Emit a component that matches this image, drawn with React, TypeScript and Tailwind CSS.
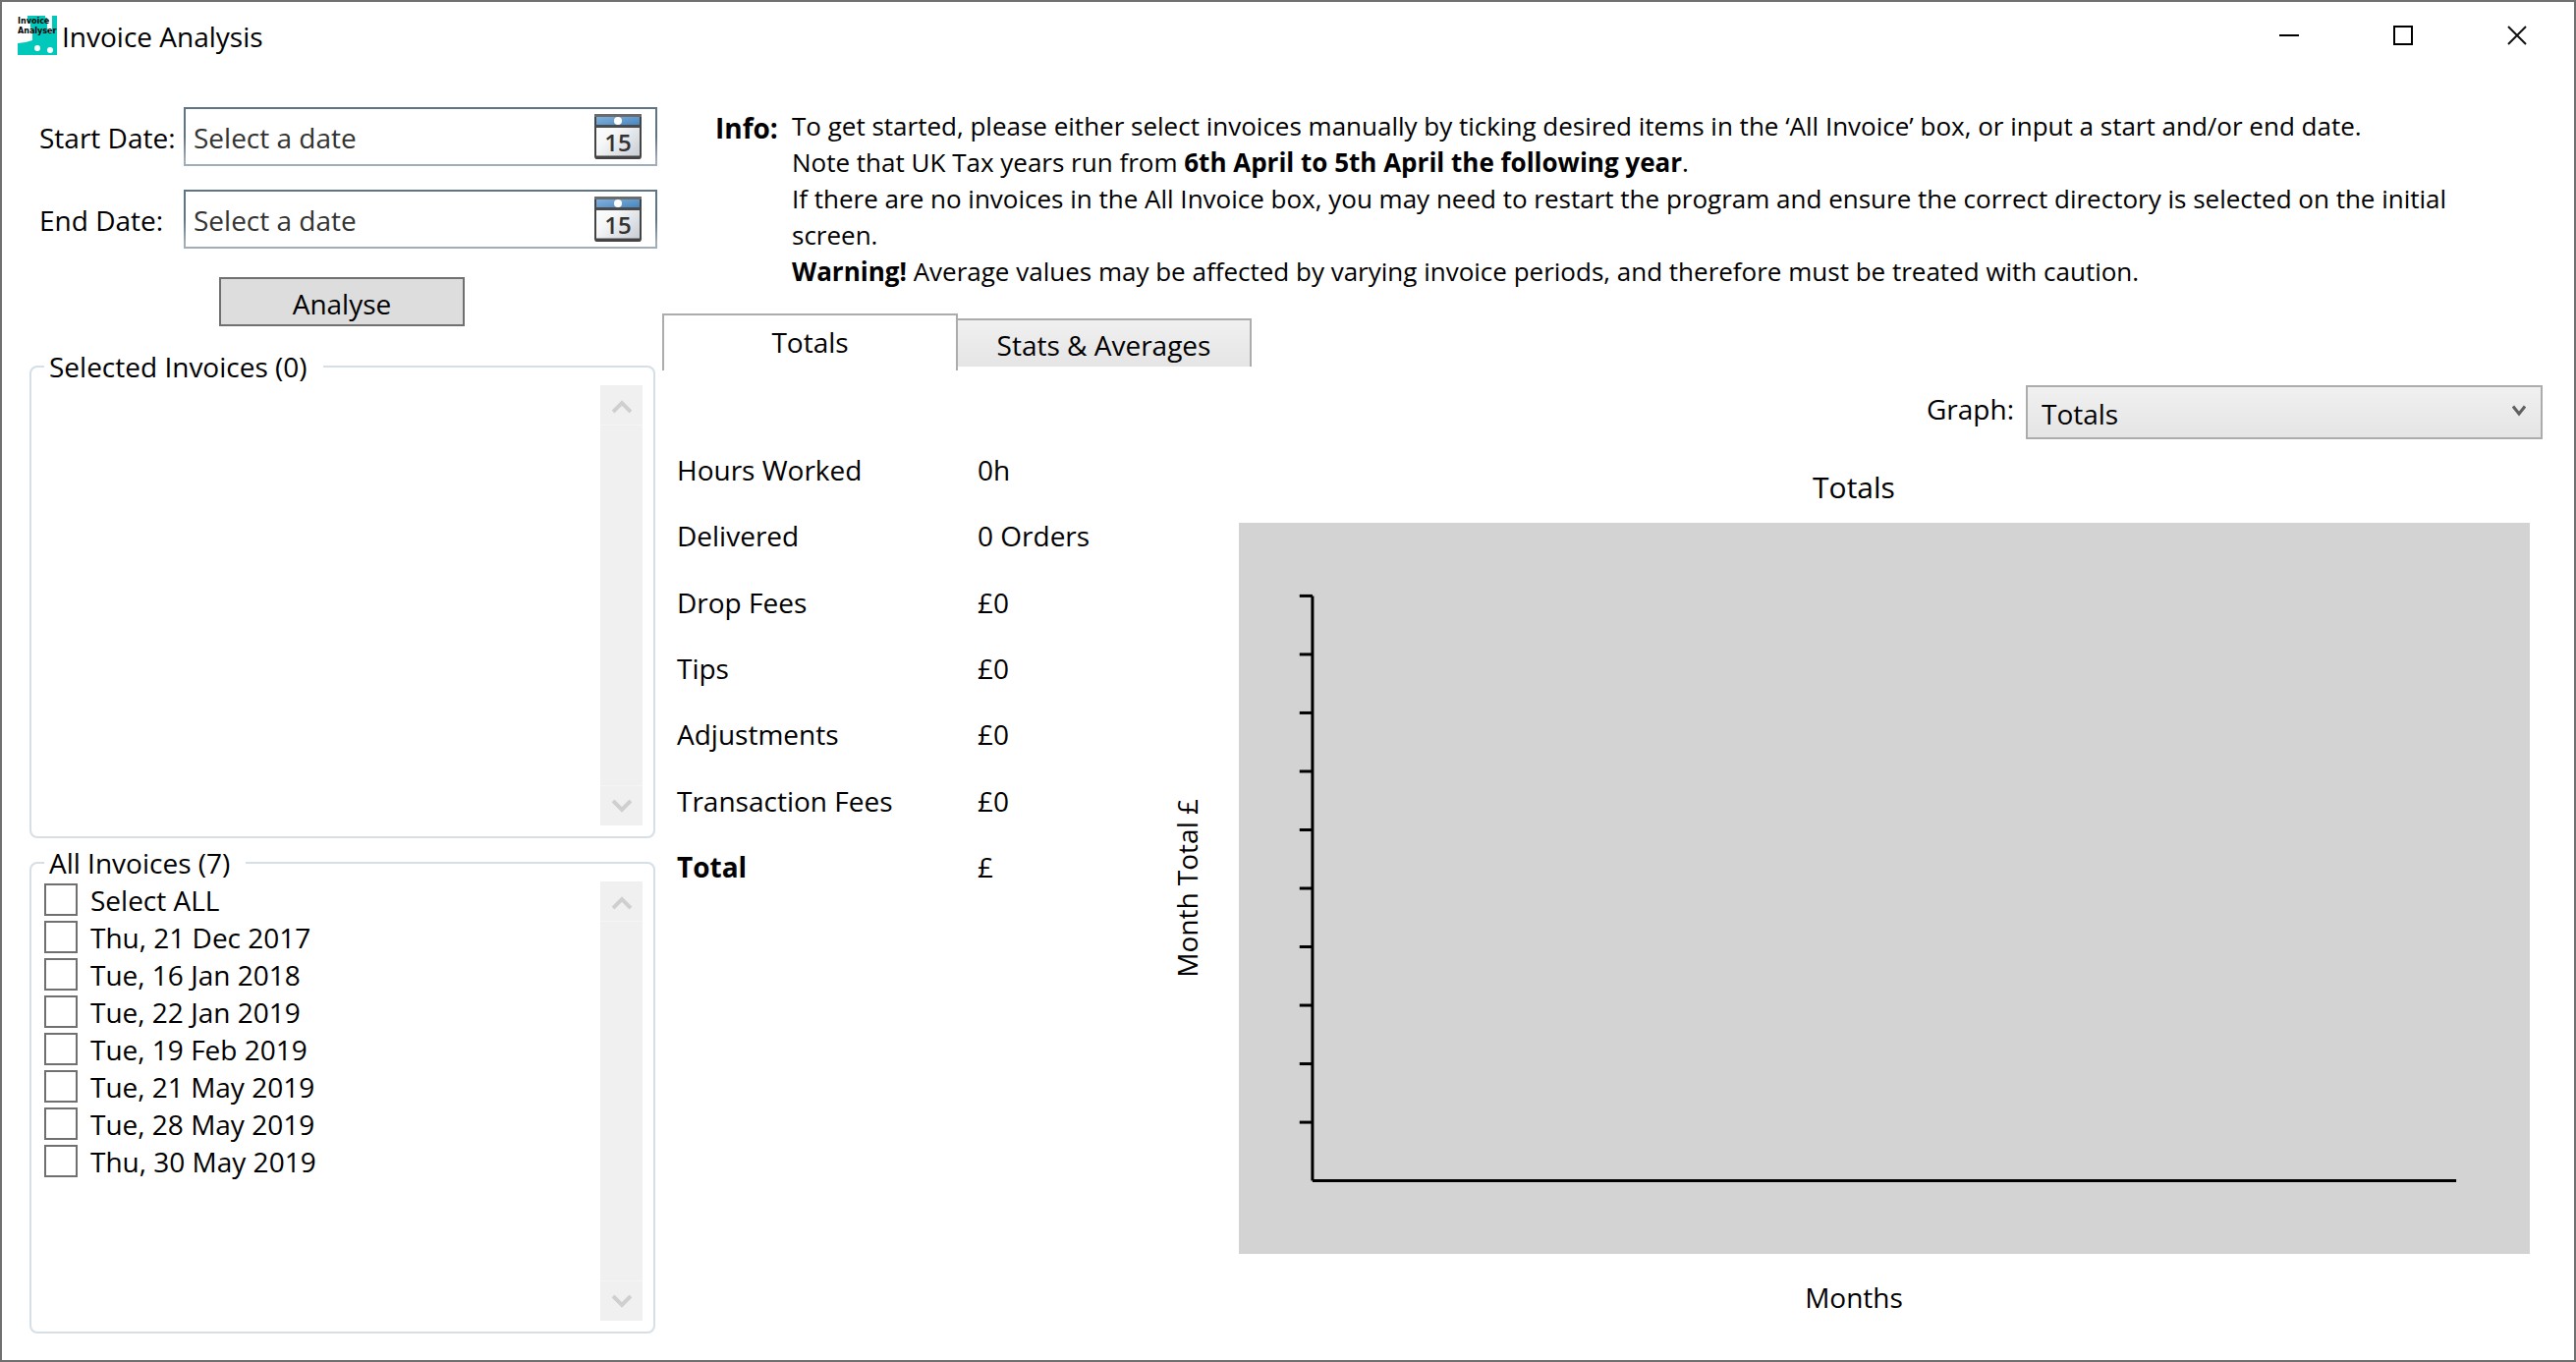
import { useState } from "react";

const INVOICES = [
  "Thu, 21 Dec 2017",
  "Tue, 16 Jan 2018",
  "Tue, 22 Jan 2019",
  "Tue, 19 Feb 2019",
  "Tue, 21 May 2019",
  "Tue, 28 May 2019",
  "Thu, 30 May 2019",
];

const TOTALS = [
  ["Hours Worked", "0h"],
  ["Delivered", "0 Orders"],
  ["Drop Fees", "£0"],
  ["Tips", "£0"],
  ["Adjustments", "£0"],
  ["Transaction Fees", "£0"],
  ["Total", "£"],
];

function AppLogo() {
  return (
    <svg width="40" height="40" viewBox="0 0 40 40" aria-hidden="true">
      <path
        d="M10 0H28V2H30V12L32 18H35V0H40V40H0V28L8 27L15 25V16L13 12V8L10 6Z"
        fill="#00c9bc"
      />
      <circle cx="20" cy="33" r="3" fill="#fff" />
      <circle cx="33" cy="35" r="3" fill="#fff" />
      <text x="0" y="8" fontSize="8" fontWeight="700" fontFamily="DejaVu Sans, sans-serif">
        Invoice
      </text>
      <text x="0" y="18" fontSize="8" fontWeight="700" fontFamily="DejaVu Sans, sans-serif">
        Analyser
      </text>
    </svg>
  );
}

function TitleBar() {
  return (
    <header className="flex h-[68px] shrink-0 items-center pl-4">
      <AppLogo />
      <h1 className="ml-[5px] grow pt-[2px] text-[28px] leading-9">Invoice Analysis</h1>
      <button type="button" aria-label="Minimise" className="flex h-16 w-[116px] items-center justify-center">
        <svg width="20" height="20" viewBox="0 0 20 20">
          <path d="M0 10H20" stroke="#000" strokeWidth="2" />
        </svg>
      </button>
      <button type="button" aria-label="Maximise" className="flex h-16 w-[116px] items-center justify-center">
        <svg width="20" height="20" viewBox="0 0 20 20">
          <rect x="1" y="1" width="18" height="18" fill="none" stroke="#000" strokeWidth="2" />
        </svg>
      </button>
      <button type="button" aria-label="Close" className="flex h-16 w-[116px] items-center justify-center">
        <svg width="20" height="20" viewBox="0 0 20 20">
          <path d="M1 1L19 19M19 1L1 19" stroke="#111" strokeWidth="2" />
        </svg>
      </button>
    </header>
  );
}

function CalendarIcon() {
  return (
    <svg width="48" height="46" viewBox="0 0 48 46" aria-hidden="true">
      <defs>
        <linearGradient id="calBlue" x1="0" y1="0" x2="1" y2="1">
          <stop offset="0" stopColor="#86b3de" />
          <stop offset="1" stopColor="#4384be" />
        </linearGradient>
        <linearGradient id="calPage" x1="0" y1="0" x2="1" y2="1">
          <stop offset="0" stopColor="#ffffff" />
          <stop offset="0.4" stopColor="#f6f7f8" />
          <stop offset="1" stopColor="#c5cbd2" />
        </linearGradient>
      </defs>
      <rect x="1" y="1" width="46" height="44" rx="2" fill="url(#calPage)" stroke="#444" strokeWidth="2" />
      <rect x="2" y="2" width="44" height="10" fill="url(#calBlue)" />
      <path d="M0 1.5H48" stroke="#6b6b6b" strokeWidth="3" />
      <path d="M1 12.5H47" stroke="#4a4a4a" strokeWidth="3" />
      <path d="M1 44H47" stroke="#444" strokeWidth="3" />
      <ellipse cx="24" cy="7" rx="4" ry="4" fill="#fff" />
      <text x="24" y="38" textAnchor="middle" fontSize="24" fontWeight="600" fill="#333" fontFamily="Open Sans, sans-serif">
        15
      </text>
    </svg>
  );
}

function DateField({ id, label }: { id: string; label: string }) {
  return (
    <div className="flex items-center">
      <label htmlFor={id} className="w-[147px] shrink-0 pt-[2px]">
        {label}
      </label>
      <div className="flex h-[60px] grow bg-linear-to-b from-[#5f7485] from-50% to-[#a0aebb] to-90% p-[2px]">
        <div className="flex grow items-center bg-white pl-2 pr-[14px]">
          <input
            id={id}
            type="text"
            placeholder="Select a date"
            className="h-full w-0 grow bg-transparent pt-[2px] text-[#333333] outline-none placeholder:text-[#333333]"
          />
          <button type="button" aria-label={"Open calendar for " + label}>
            <CalendarIcon />
          </button>
        </div>
      </div>
    </div>
  );
}

function Chevron({ up }: { up?: boolean }) {
  return (
    <svg width="20" height="14" viewBox="0 0 20 14" aria-hidden="true">
      {up ? (
        <path d="M1 12L10 3L19 12" fill="none" stroke="#cfcfcf" strokeWidth="4" />
      ) : (
        <path d="M1 2L10 11L19 2" fill="none" stroke="#cfcfcf" strokeWidth="4" />
      )}
    </svg>
  );
}

function ScrollTrack() {
  return (
    <div className="flex w-[43px] shrink-0 flex-col justify-between bg-[#f0f0f0]">
      <button type="button" aria-label="Scroll up" disabled className="flex h-[41px] items-center justify-center border-b border-[#f5f5f5] pt-1">
        <Chevron up />
      </button>
      <button type="button" aria-label="Scroll down" disabled className="flex h-[41px] items-center justify-center border-t border-[#f5f5f5]">
        <Chevron />
      </button>
    </div>
  );
}

function InvoiceBox({ title, children }: { title: string; children?: React.ReactNode }) {
  return (
    <fieldset className="flex min-h-0 flex-1 rounded-lg border-2 border-[#d5dfe5] pl-[13px] pr-[11px] pb-[11px]">
      <legend className="pl-[5px] pr-4 leading-[38px]">{title}</legend>
      <div className="flex grow">
        <div className="grow">{children}</div>
        <ScrollTrack />
      </div>
    </fieldset>
  );
}

function CheckItem({ label, checked, onChange }: { label: string; checked: boolean; onChange: () => void }) {
  return (
    <label className="flex h-[38px] items-center gap-[13px]">
      <input
        type="checkbox"
        checked={checked}
        onChange={onChange}
        className="h-[33px] w-[34px] appearance-none border-2 border-[#707070] bg-white checked:bg-[#707070]"
      />
      {label}
    </label>
  );
}

function Chart() {
  const ticks = Array.from({ length: 10 }, (_, i) => 10 + i * 8);
  return (
    <svg className="h-full w-full" role="img" aria-label="Month totals chart">
      <g stroke="#000" strokeWidth="3">
        {ticks.map((y) => (
          <line key={y} x1="4.7%" x2="5.7%" y1={y + "%"} y2={y + "%"} />
        ))}
        <line x1="5.7%" x2="5.7%" y1="10%" y2="90%" />
        <line x1="5.7%" x2="94.3%" y1="90%" y2="90%" />
      </g>
    </svg>
  );
}

export default function App() {
  const [ticked, setTicked] = useState<string[]>([]);
  const [tab, setTab] = useState("totals");
  const toggle = (name: string) =>
    setTicked((t) => (t.includes(name) ? t.filter((n) => n !== name) : [...t, name]));

  return (
    <div className="flex min-h-screen flex-col border-2 border-[#707070] bg-white font-['Open_Sans',sans-serif] text-[28px] leading-[38px] text-black">
      <TitleBar />
      <main className="flex grow">
        <section className="flex w-[667px] shrink-0 flex-col pb-[27px] pl-7">
          <form className="flex flex-col pl-[10px] pt-[39px]" onSubmit={(e) => e.preventDefault()}>
            <DateField id="start" label="Start Date:" />
            <div className="h-6" />
            <DateField id="end" label="End Date:" />
            <button
              type="submit"
              className="ml-[183px] mt-[29px] h-[50px] w-[250px] border-2 border-[#707070] bg-[#dddddd] pt-1"
            >
              Analyse
            </button>
          </form>
          <div className="mt-[22px] flex grow flex-col gap-[6px] pr-[2px]">
            <InvoiceBox title={"Selected Invoices (" + ticked.length + ")"}>
              {ticked.map((n) => (
                <div key={n}>{n}</div>
              ))}
            </InvoiceBox>
            <InvoiceBox title={"All Invoices (" + INVOICES.length + ")"}>
              <CheckItem
                label="Select ALL"
                checked={ticked.length === INVOICES.length}
                onChange={() => setTicked(ticked.length === INVOICES.length ? [] : INVOICES)}
              />
              {INVOICES.map((n) => (
                <CheckItem key={n} label={n} checked={ticked.includes(n)} onChange={() => toggle(n)} />
              ))}
            </InvoiceBox>
          </div>
        </section>

        <section className="flex grow flex-col pl-[5px]">
          <div className="flex pl-[54px] pr-[72px] pt-10 text-[26px] leading-[37px]">
            <strong className="w-[78px] shrink-0 pt-[2px] text-[28px]">Info:</strong>
            <div>
              <p>
                To get started, please either select invoices manually by ticking desired items in the ‘All Invoice’
                box, or input a start and/or end date.
              </p>
              <p>
                Note that UK Tax years run from <strong>6th April to 5th April the following year</strong>.
              </p>
              <p>
                If there are no invoices in the All Invoice box, you may need to restart the program and ensure the
                correct directory is selected on the initial screen.
              </p>
              <p>
                <strong>Warning!</strong> Average values may be affected by varying invoice periods, and therefore must
                be treated with caution.
              </p>
            </div>
          </div>

          <div role="tablist" className="mt-6 flex h-[58px] items-start">
            <button
              type="button"
              role="tab"
              aria-selected={tab === "totals"}
              onClick={() => setTab("totals")}
              className="h-[58px] w-[301px] border-x-2 border-t-2 border-[#acacac] bg-white pb-[2px]"
            >
              Totals
            </button>
            <button
              type="button"
              role="tab"
              aria-selected={tab === "stats"}
              onClick={() => setTab("stats")}
              className="mt-[5px] h-[49px] w-[299px] border-r-2 border-t-2 border-[#acacac] bg-linear-to-b from-[#f0f0f0] to-[#e5e5e5] pt-[2px]"
            >
              Stats &amp; Averages
            </button>
          </div>

          <div className="flex grow">
            <div className="w-[504px] shrink-0 pl-[15px] pt-[67px]">
              <table className="h-[472px] w-full text-left">
                <tbody>
                  {TOTALS.map(([name, value]) => (
                    <tr key={name}>
                      <th scope="row" className={name === "Total" ? "w-[306px] font-bold" : "w-[306px] font-normal"}>
                        {name}
                      </th>
                      <td>{value}</td>
                    </tr>
                  ))}
                </tbody>
              </table>
            </div>

            <div className="flex grow flex-col">
              <div className="flex items-start justify-end pr-8 pt-[15px]">
                <label htmlFor="graph" className="mr-3 mt-[5px]">
                  Graph:
                </label>
                <div className="relative w-[526px]">
                  <select
                    id="graph"
                    className="h-[55px] w-full appearance-none border-2 border-[#acacac] bg-linear-to-b from-[#f0f0f0] to-[#e5e5e5] pl-[14px] pt-[2px] leading-[38px]"
                  >
                    <option>Totals</option>
                  </select>
                  <svg className="pointer-events-none absolute right-[17px] top-5" width="14" height="12" viewBox="0 0 14 12">
                    <path d="M1 1.5L7 9L13 1.5" fill="none" stroke="#606060" strokeWidth="3" />
                  </svg>
                </div>
              </div>
              <h2 className="ml-[21px] mr-[45px] mt-[29px] text-center text-[30px] leading-10">Totals</h2>
              <div className="mt-4 flex h-[744px]">
                <div className="flex w-[83px] items-center justify-center pr-6">
                  <span className="rotate-180 [writing-mode:vertical-rl]">Month Total £</span>
                </div>
                <div className="mr-[45px] grow bg-[#d3d3d3]">
                  <Chart />
                </div>
              </div>
              <p className="ml-[21px] mr-[45px] mt-[25px] text-center">Months</p>
            </div>
          </div>
        </section>
      </main>
    </div>
  );
}
